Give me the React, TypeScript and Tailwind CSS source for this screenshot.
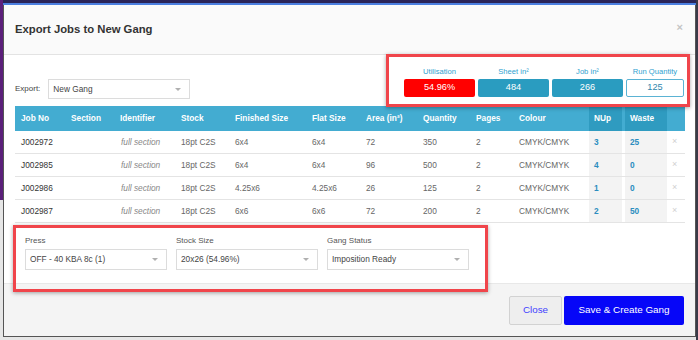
import React from 'react';

const cols = [
  { key: 'job', label: 'Job No', w: 'w-[50px]' },
  { key: 'section', label: 'Section', w: 'w-[49px]' },
  { key: 'ident', label: 'Identifier', w: 'w-[61px]' },
  { key: 'stock', label: 'Stock', w: 'w-[54px]' },
  { key: 'finished', label: 'Finished Size', w: 'w-[77px]' },
  { key: 'flat', label: 'Flat Size', w: 'w-[54px]' },
  { key: 'area', label: 'Area (in²)', w: 'w-[57px]' },
  { key: 'qty', label: 'Quantity', w: 'w-[53px]' },
  { key: 'pages', label: 'Pages', w: 'w-[43px]' },
  { key: 'colour', label: 'Colour', w: 'w-[76px]' },
];

const rows = [
  { job: 'J002972', section: '', ident: 'full section', stock: '18pt C2S', finished: '6x4', flat: '6x4', area: '72', qty: '350', pages: '2', colour: 'CMYK/CMYK', nup: '3', waste: '25' },
  { job: 'J002985', section: '', ident: 'full section', stock: '18pt C2S', finished: '6x4', flat: '6x4', area: '96', qty: '500', pages: '2', colour: 'CMYK/CMYK', nup: '4', waste: '0' },
  { job: 'J002986', section: '', ident: 'full section', stock: '18pt C2S', finished: '4.25x6', flat: '4.25x6', area: '26', qty: '125', pages: '2', colour: 'CMYK/CMYK', nup: '1', waste: '0' },
  { job: 'J002987', section: '', ident: 'full section', stock: '18pt C2S', finished: '6x6', flat: '6x6', area: '72', qty: '200', pages: '2', colour: 'CMYK/CMYK', nup: '2', waste: '50' },
];

const stats = [
  { label: 'Utilisation', value: '54.96%', cls: 'w-[71px] bg-[#ff0000] text-white' },
  { label: 'Sheet in²', value: '484', cls: 'w-[71px] bg-[#2a9cc0] text-white' },
  { label: 'Job in²', value: '266', cls: 'w-[71px] bg-[#2a9cc0] text-white' },
  { label: 'Run Quantity', value: '125', cls: 'w-[58px] bg-white border border-[#5bb3d4] text-[#2f86ad]' },
];

function Caret() {
  return <span className="ml-auto w-0 h-0 border-l-[3px] border-r-[3px] border-t-[3px] border-l-transparent border-r-transparent border-t-[#b0b0b0]" />;
}

function Select({ value, className }: { value: string; className: string }) {
  return (
    <div className={`flex items-center border border-[#dcdcdc] bg-white pr-[8px] text-[8.3px] text-[#444] ${className}`}>
      <span>{value}</span>
      <Caret />
    </div>
  );
}

export default function App() {
  return (
    <div className="relative w-[698px] h-[340px] overflow-hidden bg-[#e6e6e6] font-['Liberation_Sans',Arial,sans-serif]">
      {/* backdrop bits */}
      <div className="absolute left-0 top-0 w-[698px] h-[3px] bg-[#2a2458]" />
      <div className="absolute left-0 top-[3px] w-[698px] h-[2px] bg-[#4b7fe0]" />
      <div className="absolute left-0 top-0 w-[3px] h-[200px] bg-[#5b1f7a]" />
      <div className="absolute right-0 top-0 w-[2px] h-[340px] bg-[#3a3a48]" />

      <div className="absolute left-[3px] top-[5px] w-[693px] h-[332px] flex flex-col bg-white border-l border-r border-b border-[#555]">
        {/* header */}
        <div className="h-[50px] shrink-0 flex items-center justify-between bg-[#fafafa] border-b border-[#e3e3e3] pl-[11px] pr-[12px]">
          <h1 className="text-[11.3px] font-bold text-[#333]">Export Jobs to New Gang</h1>
          <span className="text-[11px] font-bold text-[#c4c4c4] leading-none mb-[5px]">×</span>
        </div>

        {/* body */}
        <div className="flex-1 flex flex-col px-[11px] pt-[11px]">
          <div className="flex items-end justify-between">
            <div className="flex items-center gap-[8px]">
              <span className="text-[8px] text-[#444]">Export:</span>
              <Select value="New Gang" className="w-[142px] h-[20px] pl-[4px]" />
            </div>
            <div className="flex gap-[3px] mb-[2px]">
              {stats.map((s) => (
                <div key={s.label} className="flex flex-col items-center gap-[2px]">
                  <span className="text-[7.6px] text-[#2f9fd0] leading-[11px]">{s.label}</span>
                  <div className={`h-[18px] rounded-[2px] flex items-center justify-center text-[9.2px] ${s.cls}`}>{s.value}</div>
                </div>
              ))}
            </div>
          </div>

          {/* table */}
          <div className="mt-[7px] w-[670px] text-[8.3px]">
            <div className="flex h-[25px] bg-[#43acd1] text-white font-bold">
              {cols.map((c) => (
                <div key={c.key} className={`${c.w} pl-[6px] flex items-center`}>{c.label}</div>
              ))}
              <div className="w-[33px] pl-[5px] flex items-center bg-[#2f9bc0]">NUp</div>
              <div className="w-[42px] ml-[3px] pl-[5px] flex items-center bg-[#2f9bc0]">Waste</div>
              <div className="flex-1" />
            </div>
            {rows.map((r) => (
              <div key={r.job} className="flex h-[23px] border-b border-[#e4e4e4] text-[#666]">
                <div className="w-[50px] pl-[6px] flex items-center text-[#333]">{r.job}</div>
                <div className="w-[49px] pl-[6px] flex items-center">{r.section}</div>
                <div className="w-[61px] pl-[7px] flex items-center italic text-[#888]">{r.ident}</div>
                <div className="w-[54px] pl-[6px] flex items-center">{r.stock}</div>
                <div className="w-[77px] pl-[6px] flex items-center">{r.finished}</div>
                <div className="w-[54px] pl-[6px] flex items-center">{r.flat}</div>
                <div className="w-[57px] pl-[6px] flex items-center">{r.area}</div>
                <div className="w-[53px] pl-[6px] flex items-center">{r.qty}</div>
                <div className="w-[43px] pl-[6px] flex items-center">{r.pages}</div>
                <div className="w-[76px] pl-[6px] flex items-center">{r.colour}</div>
                <div className="w-[33px] pl-[5px] flex items-center bg-[#f3f3f3] font-bold text-[#2b8dbf]">{r.nup}</div>
                <div className="w-[42px] ml-[3px] pl-[5px] flex items-center bg-[#f3f3f3] font-bold text-[#2b8dbf]">{r.waste}</div>
                <div className="flex-1 flex items-center pl-[5px] text-[#d0d0d0] text-[9px]">×</div>
              </div>
            ))}
          </div>

          {/* gang settings */}
          <div className="flex gap-[9px] pl-[10px] mt-[12px]">
            {[
              { label: 'Press', value: 'OFF - 40 KBA 8c (1)' },
              { label: 'Stock Size', value: '20x26 (54.96%)' },
              { label: 'Gang Status', value: 'Imposition Ready' },
            ].map((f) => (
              <div key={f.label} className="flex flex-col gap-[3px]">
                <span className="text-[8px] text-[#555] leading-[11px]">{f.label}</span>
                <Select value={f.value} className="w-[142px] h-[21px] pl-[4px]" />
              </div>
            ))}
          </div>
        </div>

        {/* footer */}
        <div className="h-[53px] shrink-0 flex items-center justify-end gap-[2px] bg-[#f4f4f4] border-t border-[#e8e8e8] pr-[11px]">
          <button className="h-[29px] w-[53px] bg-[#eeeeee] border border-[#d2d2d2] rounded-[2px] text-[9.8px] text-[#3f3fff]">Close</button>
          <button className="h-[29px] w-[120px] bg-[#0606f8] rounded-[2px] text-[9.9px] text-white">Save &amp; Create Gang</button>
        </div>
      </div>

      {/* annotation boxes */}
      <div className="absolute left-[386px] top-[54px] w-[304px] h-[53px] border-[3px] border-[#f0454b] shadow-[0_1px_4px_rgba(0,0,0,0.35)]" />
      <div className="absolute left-[13px] top-[225px] w-[475px] h-[67px] border-[3px] border-[#f0454b] shadow-[0_1px_4px_rgba(0,0,0,0.35)]" />
    </div>
  );
}
